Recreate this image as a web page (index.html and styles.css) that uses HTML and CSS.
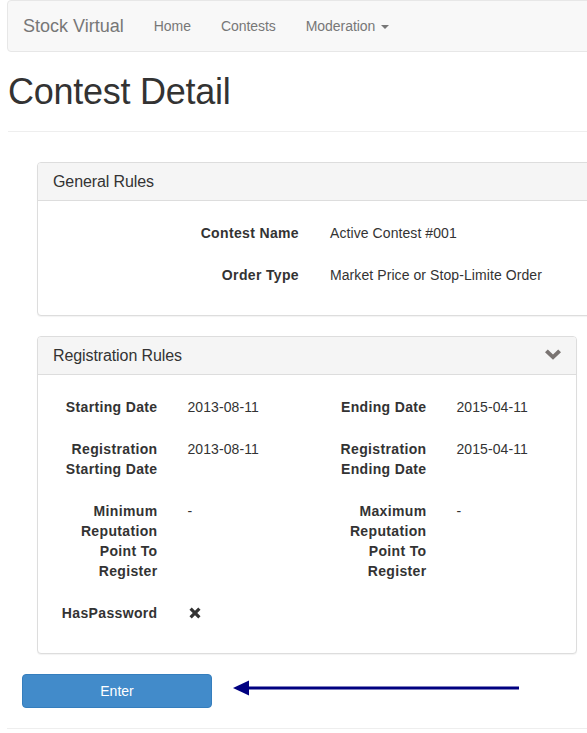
FILE: index.html
```html
<!DOCTYPE html>
<html lang="en">
<head>
<meta charset="utf-8">
<title>Contest Detail</title>
<link rel="stylesheet" href="styles.css">
</head>
<body>
<div class="page">
  <nav class="navbar">
    <a class="brand" href="#">Stock Virtual</a>
    <ul class="nav">
      <li><a href="#">Home</a></li>
      <li><a href="#">Contests</a></li>
      <li><a href="#">Moderation <span class="caret"></span></a></li>
    </ul>
  </nav>

  <div class="page-header">
    <h1>Contest Detail</h1>
  </div>

  <div class="content">
    <section class="panel panel-general">
      <div class="panel-heading">
        <h3 class="panel-title">General Rules</h3>
      </div>
      <div class="panel-body general-grid">
        <div class="label">Contest Name</div>
        <div class="value">Active Contest #001</div>
        <div class="label">Order Type</div>
        <div class="value">Market Price or Stop-Limite Order</div>
      </div>
    </section>

    <section class="panel panel-registration">
      <div class="panel-heading">
        <h3 class="panel-title">Registration Rules</h3>
        <svg class="chevron" width="16" height="11" viewBox="0 0 16 11" aria-hidden="true">
          <polygon points="0,3.2 2.8,0.4 8,5.4 13.2,0.4 16,3.2 8,10.8" fill="#7a7472"/>
        </svg>
      </div>
      <div class="panel-body registration-grid">
        <div class="label">Starting Date</div>
        <div class="value">2013-08-11</div>
        <div class="label">Ending Date</div>
        <div class="value">2015-04-11</div>

        <div class="label">Registration Starting Date</div>
        <div class="value">2013-08-11</div>
        <div class="label">Registration Ending Date</div>
        <div class="value">2015-04-11</div>

        <div class="label">Minimum Reputation Point To Register</div>
        <div class="value">-</div>
        <div class="label">Maximum Reputation Point To Register</div>
        <div class="value">-</div>

        <div class="label">HasPassword</div>
        <div class="value">
          <svg class="remove" width="12" height="12" viewBox="0 0 12 12" aria-hidden="true">
            <path d="M1.6 1.6 L10.4 10.4 M10.4 1.6 L1.6 10.4" stroke="#333" stroke-width="3.2" stroke-linecap="butt"/>
          </svg>
        </div>
      </div>
    </section>

    <div class="actions">
      <button class="btn btn-primary" type="button">Enter</button>
      <svg class="arrow" width="286" height="16" viewBox="0 0 286 16" aria-hidden="true">
        <polygon points="0,8 16,0.5 16,15.5" fill="#000080"/>
        <rect x="14" y="6.5" width="272" height="3" fill="#000080"/>
      </svg>
    </div>
  </div>

  <hr class="footer-rule">
</div>
</body>
</html>
```

FILE: styles.css
```css
html, body {
  margin: 0;
  padding: 0;
  overflow: hidden;
  background: #fff;
}

body {
  font-family: "Liberation Sans", Arial, Helvetica, sans-serif;
  font-size: 14px;
  line-height: 20px;
  color: #333;
}

.page {
  width: 640px;
  padding-left: 7px;
}

/* Navbar */
.navbar {
  display: flex;
  align-items: stretch;
  height: 52px;
  box-sizing: border-box;
  background: #f8f8f8;
  border: 1px solid #e7e7e7;
  border-radius: 4px;
  margin-bottom: 20px;
}

.brand {
  display: block;
  padding: 15px;
  font-size: 18px;
  line-height: 20px;
  color: #777;
  text-decoration: none;
}

.nav {
  display: flex;
  list-style: none;
  margin: 0;
  padding: 0;
}

.nav a {
  display: block;
  padding: 15px;
  line-height: 20px;
  color: #777;
  text-decoration: none;
  letter-spacing: -0.05px;
}

.caret {
  display: inline-block;
  width: 0;
  height: 0;
  margin-left: 2px;
  vertical-align: middle;
  border-top: 4px solid #777;
  border-left: 4px solid transparent;
  border-right: 4px solid transparent;
}

/* Header */
.page-header {
  padding-bottom: 9px;
  border-bottom: 1px solid #eee;
  margin-left: 1px;
}

.page-header h1 {
  margin: 0 0 10px;
  font-size: 36px;
  font-weight: 500;
  line-height: 1.1;
  color: #333;
  letter-spacing: -0.25px;
}

/* Content */
.content {
  padding-left: 15px;
  padding-top: 30px;
}

.panel {
  margin-left: 15px;
  margin-bottom: 20px;
  background: #fff;
  border: 1px solid #ddd;
  border-radius: 4px;
  box-shadow: 0 1px 1px rgba(0, 0, 0, 0.05);
}

.panel-general {
  width: 554px;
  box-sizing: border-box;
}

.panel-registration {
  width: 540px;
  box-sizing: border-box;
}

.panel-heading {
  display: flex;
  align-items: center;
  justify-content: space-between;
  padding: 10px 15px;
  background: #f5f5f5;
  border-bottom: 1px solid #ddd;
  border-radius: 3px 3px 0 0;
}

.panel-title {
  margin: 0;
  font-size: 16px;
  font-weight: 500;
  line-height: 17px;
  color: #333;
  letter-spacing: -0.1px;
}

.chevron {
  display: block;
  margin-top: -2px;
}

.panel-body {
  padding: 15px 15px 30px;
}

.label,
.value {
  padding-top: 7px;
  line-height: 20px;
}

.label {
  font-weight: bold;
  text-align: right;
  letter-spacing: 0.35px;
}

.value {
  letter-spacing: 0.08px;
}

.general-grid {
  display: grid;
  grid-template-columns: 246px 1fr;
  column-gap: 31px;
  row-gap: 15px;
}

.registration-grid {
  display: grid;
  grid-template-columns: repeat(4, 1fr);
  column-gap: 30px;
  row-gap: 15px;
}

.remove {
  display: inline-block;
  vertical-align: -1px;
  margin-left: 1px;
}

/* Actions */
.actions {
  display: flex;
  align-items: flex-start;
  margin-bottom: 20px;
}

.btn {
  width: 190px;
  height: 34px;
  box-sizing: border-box;
  padding: 6px 12px;
  font-family: inherit;
  font-size: 14px;
  line-height: 20px;
  border-radius: 4px;
  cursor: pointer;
}

.btn-primary {
  color: #fff;
  background: #428bca;
  border: 1px solid #357ebd;
}

.arrow {
  display: block;
  margin-left: 21px;
  margin-top: 6px;
}

.footer-rule {
  margin: 0;
  border: 0;
  border-top: 1px solid #eee;
}
```
